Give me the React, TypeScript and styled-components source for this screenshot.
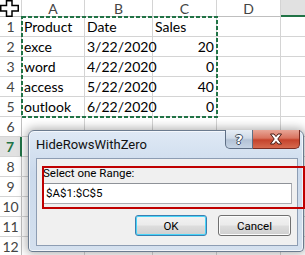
import React from "react";
import styled, { createGlobalStyle, css } from "styled-components";

const GlobalStyle = createGlobalStyle`
  html, body { margin: 0; padding: 0; background: #fff; overflow: hidden; }
  #root { width: 305px; height: 255px; overflow: hidden; }
  * { box-sizing: border-box; }
`;

const Screen = styled.div`
  position: relative;
  width: 305px;
  height: 255px;
  overflow: hidden;
  background: #fff;
`;

const Sheet = styled.div`
  display: grid;
  grid-template-columns: 22px 63px 68px 64px 64px 60px;
  grid-template-rows: 17px repeat(12, 20px);
  font-family: Lato, "Liberation Sans", sans-serif;
`;

const Corner = styled.div`
  border-right: 1px solid #d4d4d4;
  border-bottom: 1px solid #bfbfbf;
  background: #fff;
`;

const ColHeader = styled.div<{ $active?: boolean }>`
  display: flex;
  align-items: center;
  justify-content: center;
  font-size: 14px;
  color: #444;
  border-right: 1px solid #d4d4d4;
  border-bottom: 1px solid #bfbfbf;
  background: #fff;
  ${(p) =>
    p.$active &&
    css`
      background: #e1e1e1;
      border-bottom: 2px solid #217346;
    `}
`;

const RowHeader = styled.div<{ $active?: boolean }>`
  display: flex;
  align-items: center;
  justify-content: center;
  font-size: 14px;
  color: #444;
  border-right: 1px solid #bfbfbf;
  border-bottom: 1px solid #d4d4d4;
  background: #fff;
  ${(p) =>
    p.$active &&
    css`
      background: #e1e1e1;
      color: #217346;
      font-weight: 700;
      border-right: 2px solid #217346;
    `}
`;

const Cell = styled.div<{ $right?: boolean }>`
  border-right: 1px solid #d4d4d4;
  border-bottom: 1px solid #d4d4d4;
  font-size: 14px;
  color: #000;
  line-height: 19px;
  padding: 0 2px;
  white-space: nowrap;
  text-align: ${(p) => (p.$right ? "right" : "left")};
`;

const MarchingAnts = styled.svg`
  position: absolute;
  left: 21px;
  top: 16px;
  width: 197px;
  height: 102px;
  overflow: visible;
`;

const Pointer = styled.svg`
  position: absolute;
  left: 0;
  top: 0;
  width: 19px;
  height: 17px;
`;

const Dialog = styled.div`
  position: absolute;
  left: 28px;
  top: 130px;
  width: 276px;
  height: 122px;
  border: 1px solid #6b7b8f;
  border-radius: 6px 6px 4px 4px;
  background: linear-gradient(180deg, #dfe9f5 0%, #cbdaec 35%, #d4e0ee 100%);
  box-shadow: 0 0 10px 2px rgba(0, 0, 0, 0.3), inset 0 0 0 1px rgba(255, 255, 255, 0.65);
  display: flex;
  flex-direction: column;
  padding: 0 5px 5px 7px;
`;

const TitleBar = styled.div`
  height: 27px;
  flex: none;
  display: flex;
  align-items: flex-start;
`;

const Title = styled.div`
  font-family: Roboto, "Noto Sans", sans-serif;
  font-size: 13px;
  color: #111;
  padding-top: 6px;
  letter-spacing: 0;
`;

const CaptionButtons = styled.div`
  position: absolute;
  top: -1px;
  right: 3px;
  display: flex;
`;

const CaptionButton = styled.div<{ $close?: boolean }>`
  height: 19px;
  width: ${(p) => (p.$close ? "47px" : "28px")};
  display: flex;
  align-items: center;
  justify-content: center;
  border: 1px solid #5f6f85;
  border-top: none;
  font-family: "DejaVu Sans", sans-serif;
  font-weight: 700;
  font-size: 13px;
  color: #fff;
  text-shadow: -1px 0 #3c4a5c, 1px 0 #3c4a5c, 0 -1px #3c4a5c, 0 1px #3c4a5c;
  ${(p) =>
    p.$close
      ? css`
          border-radius: 0 0 5px 0;
          border-left: none;
          background: linear-gradient(180deg, #e8a697 0%, #d9735f 45%, #c5432c 55%, #d66a4f 100%);
          border-color: #7a2c22;
        `
      : css`
          border-radius: 0 0 0 5px;
          background: linear-gradient(180deg, #e6edf5 0%, #cfdae7 45%, #b3c2d5 55%, #c6d4e4 100%);
        `}
`;

const Client = styled.div`
  flex: 1;
  background: #f0f0f0;
  border: 1px solid #8d9db3;
  padding: 7px 5px 0 6px;
  display: flex;
  flex-direction: column;
  font-family: Roboto, "Noto Sans", sans-serif;
  font-size: 11.5px;
  color: #000;
`;

const Label = styled.div`
  line-height: 15px;
  height: 15px;
`;

const Input = styled.div`
  margin-top: 2px;
  height: 21px;
  background: #fff;
  border: 1px solid #abadb3;
  border-top-color: #8e9298;
  padding: 0 2px;
  line-height: 19px;
`;

const ButtonRow = styled.div`
  margin-top: 11px;
  display: flex;
  justify-content: flex-end;
  gap: 11px;
  padding-right: 1px;
`;

const Button = styled.div<{ $default?: boolean }>`
  height: 21px;
  width: ${(p) => (p.$default ? "72px" : "73px")};
  border: 1px solid ${(p) => (p.$default ? "#3c7fb1" : "#707070")};
  border-radius: 3px;
  background: linear-gradient(180deg, #f2f2f2 0%, #ebebeb 48%, #dddddd 52%, #cfcfcf 100%);
  box-shadow: inset 0 0 0 1px ${(p) => (p.$default ? "#48d4f8" : "#fcfcfc")};
  display: flex;
  align-items: center;
  justify-content: center;
`;

const Annotation = styled.div`
  position: absolute;
  left: 42px;
  top: 166px;
  width: 263px;
  height: 43px;
  border: 2px solid #c00000;
`;

const columns = ["A", "B", "C", "D", ""];
const data: [string, string, string][] = [
  ["Product", "Date", "Sales"],
  ["exce", "3/22/2020", "20"],
  ["word", "4/22/2020", "0"],
  ["access", "5/22/2020", "40"],
  ["outlook", "6/22/2020", "0"],
];

export default function App() {
  const rows = Array.from({ length: 12 }, (_, i) => i + 1);
  return (
    <>
      <GlobalStyle />
      <Screen>
        <Sheet>
          <Corner />
          {columns.map((c, i) => (
            <ColHeader key={i} $active={i === 4}>
              {c}
            </ColHeader>
          ))}
          {rows.map((r) => {
            const d = data[r - 1];
            return (
              <React.Fragment key={r}>
                <RowHeader $active={r === 7}>{r}</RowHeader>
                <Cell>{d ? d[0] : ""}</Cell>
                <Cell $right={r > 1}>{d ? d[1] : ""}</Cell>
                <Cell $right={r > 1}>{d ? d[2] : ""}</Cell>
                <Cell />
                <Cell />
              </React.Fragment>
            );
          })}
        </Sheet>

        <MarchingAnts viewBox="0 0 197 102">
          <rect x="1" y="1" width="195" height="100" fill="none" stroke="#217346" strokeWidth="2" strokeDasharray="4 2" />
        </MarchingAnts>

        <Pointer viewBox="0 0 19 17">
          <path
            d="M6.5 0.75 H12 V5.5 H18.25 V11 H12 V16.25 H6.5 V11 H0.75 V5.5 H6.5 Z"
            fill="#fff"
            stroke="#000"
            strokeWidth="1.5"
            strokeLinejoin="miter"
          />
        </Pointer>

        <Dialog>
          <TitleBar>
            <Title>HideRowsWithZero</Title>
          </TitleBar>
          <CaptionButtons>
            <CaptionButton>?</CaptionButton>
            <CaptionButton $close>
              <svg width="14" height="12" viewBox="0 0 14 12">
                <path
                  d="M1.5 1 H5 L7 3.6 L9 1 H12.5 L8.8 6 L12.5 11 H9 L7 8.4 L5 11 H1.5 L5.2 6 Z"
                  fill="#fff"
                  stroke="#4a1a12"
                  strokeWidth="1"
                  strokeLinejoin="round"
                />
              </svg>
            </CaptionButton>
          </CaptionButtons>
          <Client>
            <Label>Select one Range:</Label>
            <Input>$A$1:$C$5</Input>
            <ButtonRow>
              <Button $default>OK</Button>
              <Button>Cancel</Button>
            </ButtonRow>
          </Client>
        </Dialog>

        <Annotation />
      </Screen>
    </>
  );
}
